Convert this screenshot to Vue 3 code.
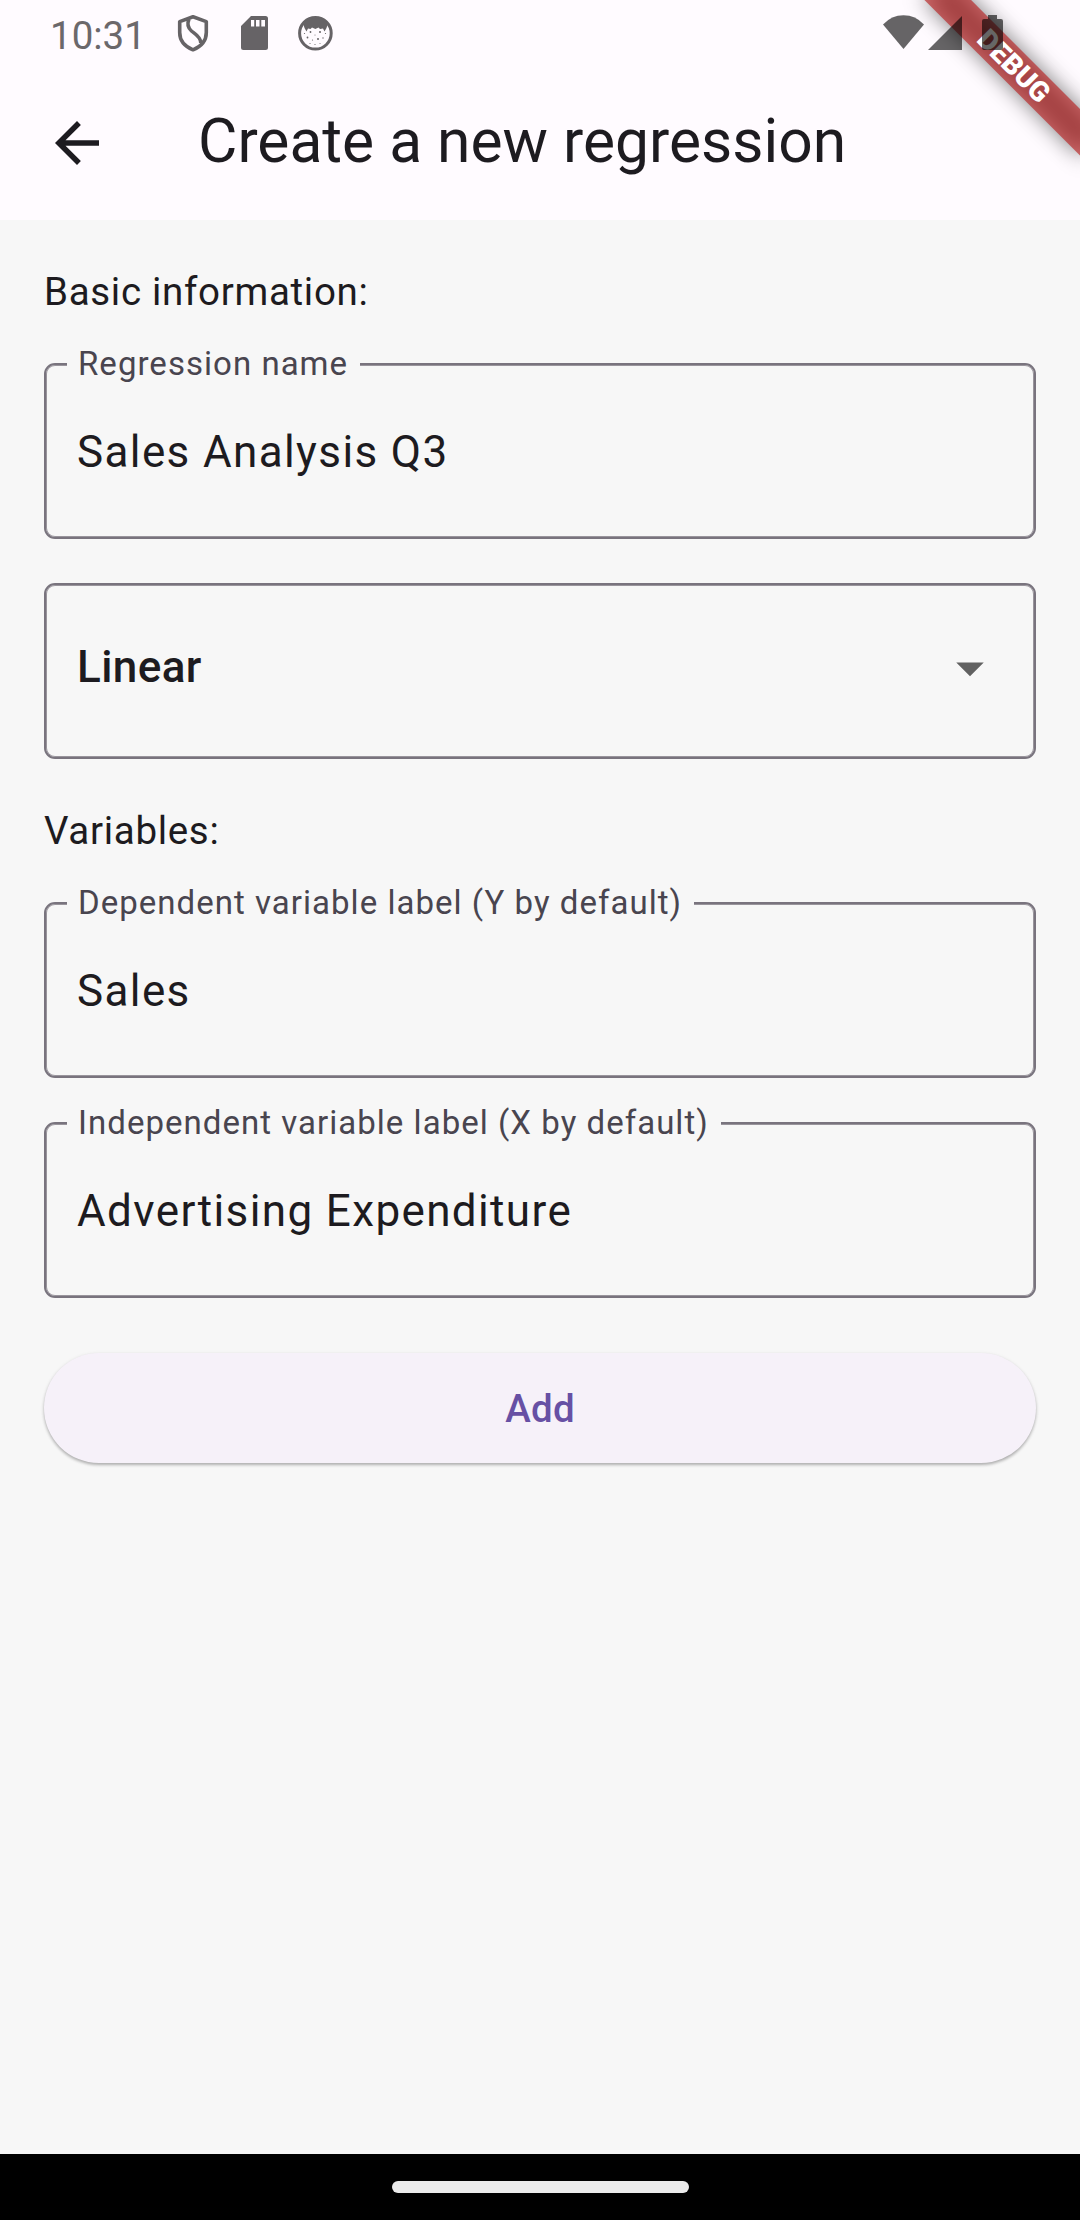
<script setup>
import { ref } from 'vue'

const name = ref('Sales Analysis Q3')
const kind = ref('Linear')
const dependent = ref('Sales')
const independent = ref('Advertising Expenditure')
</script>

<template>
  <div class="screen">
    <div class="banner-shadow"></div>
    <div class="banner"><span>DEBUG</span></div>

    <header class="top">
      <div class="status">
        <span class="clock">10:31</span>
        <svg class="shield" width="34" height="40" viewBox="0 0 34 40">
          <path d="M17 3.800 30.300 8.600V19.500C30.300 27.500 25 33.600 17 36.800 9 33.600 3.700 27.500 3.700 19.500V8.600Z" fill="none" stroke="#666366" stroke-width="3.600" stroke-linejoin="round" />
          <path d="M13 6C11.300 10 11.600 14.500 15.500 18 19 21 24.800 23.500 24.800 30" fill="none" stroke="#666366" stroke-width="3.600" />
        </svg>
        <svg class="sd" width="27" height="34" viewBox="0 0 27 34">
          <path d="M10 0H24.500Q27 0 27 2.500V31.500Q27 34 24.500 34H2.500Q0 34 0 31.500V10ZM10 4V10.500H13.200V4ZM15 4V10.500H18.500V4ZM20.300 4V10.500H24V4Z" fill="#666366" fill-rule="evenodd" />
        </svg>
        <svg class="face" width="36" height="36" viewBox="0 0 36 36">
          <circle cx="18.400" cy="18.300" r="15.800" fill="none" stroke="#666366" stroke-width="3" />
          <path d="M6 8C11 2 26 2 31 8L29.500 13 27.500 16.500 26 13.500 23 14 21.500 12.500 18.400 14 15 12.500 13.500 14 11 13.500 9.500 16.500 7.500 13Z" fill="#666366" />
          <g fill="#666366">
            <circle cx="13.500" cy="17" r=".9" /><circle cx="23" cy="17" r="1" /><circle cx="10.500" cy="22.500" r=".9" />
            <circle cx="21" cy="24" r="1" /><circle cx="15.500" cy="25" r=".6" /><circle cx="26" cy="23" r=".7" />
            <circle cx="18" cy="20" r=".5" /><circle cx="13" cy="28.500" r=".6" /><circle cx="18" cy="29.500" r=".6" />
            <circle cx="23" cy="28.500" r=".5" /><circle cx="7.500" cy="18.500" r=".6" /><circle cx="28.500" cy="18.500" r=".6" />
          </g>
        </svg>
        <span class="grow"></span>
        <svg class="wifi" width="41" height="34" viewBox="0 0 41 34">
          <path d="M0 9.500Q8.500 .3 20.500 .3T41 9.500L20.500 34Z" fill="#000" fill-opacity=".6" />
        </svg>
        <svg class="signal" width="34" height="34" viewBox="0 0 34 34">
          <path d="M34 0V34H0Z" fill="#000" fill-opacity=".6" />
        </svg>
        <svg class="battery" width="21" height="35" viewBox="0 0 21 35">
          <path d="M6 0H15V4H19Q21 4 21 6V33Q21 35 19 35H2Q0 35 0 33V6Q0 4 2 4H6Z" fill="#000" fill-opacity=".6" />
        </svg>
      </div>
      <div class="appbar">
        <svg class="back" width="66" height="66" viewBox="0 0 24 24">
          <path d="M20 11H7.830l5.590-5.590L12 4l-8 8 8 8 1.410-1.410L7.830 13H20v-2z" fill="#1d1b20" />
        </svg>
        <h1>Create a new regression</h1>
      </div>
    </header>

    <main>
      <h2>Basic information:</h2>
      <div class="field">
        <label>Regression name</label>
        <span class="value">{{ name }}</span>
      </div>
      <div class="field select">
        <span class="value">{{ kind }}</span>
        <svg class="caret" width="66" height="66" viewBox="0 0 24 24"><path d="M7 10l5 5 5-5z" fill="#616161" /></svg>
      </div>
      <h2>Variables:</h2>
      <div class="field">
        <label>Dependent variable label (Y by default)</label>
        <span class="value">{{ dependent }}</span>
      </div>
      <div class="field">
        <label>Independent variable label (X by default)</label>
        <span class="value">{{ independent }}</span>
      </div>
      <button type="button">Add</button>
    </main>

    <footer><div class="pill"></div></footer>
  </div>
</template>

<style>
body {
  margin: 0;
}
</style>

<style scoped>
.screen {
  position: relative;
  display: flex;
  flex-direction: column;
  width: 1080px;
  height: 2220px;
  overflow: hidden;
  background: #f7f7f7;
  color: #1d1b20;
  font-family: Roboto, sans-serif;
}
.top {
  height: 220px;
  background: #fffbff;
}
.status {
  position: relative;
  z-index: 3;
  display: flex;
  align-items: flex-start;
  height: 66px;
}
.status svg {
  flex: none;
}
.clock {
  width: 96px;
  margin: 13px 0 0 50px;
  font-size: 38.5px;
  line-height: 45px;
  color: #6b686b;
}
.shield { margin: 13px 0 0 30px; }
.sd { margin: 16px 0 0 31px; }
.face { margin: 15px 0 0 29px; }
.grow { flex: 1; }
.wifi { margin: 15px 4px 0 0; }
.signal { margin: 16px 20px 0 0; }
.battery { margin: 15px 77px 0 0; }
.appbar {
  display: flex;
  align-items: center;
  height: 154px;
  padding-left: 44px;
}
.back {
  margin-right: 88px;
}
h1 {
  margin: 0 0 3px;
  font-size: 60.5px;
  font-weight: 400;
  line-height: 77px;
  white-space: nowrap;
}
.banner,
.banner-shadow {
  position: absolute;
  top: 77px;
  left: 970px;
  width: 220px;
  height: 33px;
  transform: rotate(45deg);
  transform-origin: 110px -77px;
}
.banner-shadow {
  z-index: 1;
  background: rgba(0, 0, 0, 0.5);
  filter: blur(10.9px);
}
.banner {
  z-index: 2;
  background: rgba(183, 28, 28, 0.63);
  color: #fff;
  font-size: 28.05px;
  font-weight: 900;
  line-height: 33px;
  text-align: center;
}
main {
  display: flex;
  flex: 1;
  flex-direction: column;
  gap: 44px;
  padding: 44px 44px 0;
}
h2 {
  margin: 0;
  font-size: 38.5px;
  font-weight: 400;
  line-height: 55px;
  letter-spacing: 0.69px;
}
.field {
  position: relative;
  display: flex;
  align-items: center;
  box-sizing: border-box;
  height: 176px;
  padding: 2px 31px 0;
  border: 2px solid #79747e;
  border-radius: 11px;
  box-shadow: inset 0 0 0 1px rgba(121, 116, 126, 0.75);
}
.field label {
  position: absolute;
  top: -21px;
  left: 21px;
  padding: 0 12px 0 11px;
  background: #f7f7f7;
  color: #49454f;
  font-size: 33px;
  line-height: 40px;
  letter-spacing: 1.03px;
  white-space: nowrap;
}
.value {
  font-size: 44px;
  line-height: 66px;
  letter-spacing: 1.375px;
}
.select {
  justify-content: space-between;
  padding: 0 31px 7px;
}
.select .value {
  margin-bottom: 2px;
  font-weight: 500;
  letter-spacing: 0.41px;
}
button {
  flex: none;
  height: 110px;
  margin-top: 11px;
  padding: 0;
  border: 0;
  border-radius: 55px;
  background: #f6f1f9;
  box-shadow: 0 2px 3px rgba(0, 0, 0, 0.25), 0 1px 4px rgba(0, 0, 0, 0.08);
  color: #6750a4;
  font: 500 38.5px/55px Roboto, sans-serif;
  letter-spacing: 0.275px;
}
footer {
  display: flex;
  align-items: center;
  justify-content: center;
  height: 66px;
  background: #000;
}
.pill {
  width: 297px;
  height: 12px;
  border-radius: 6px;
  background: #ebebeb;
}
</style>
